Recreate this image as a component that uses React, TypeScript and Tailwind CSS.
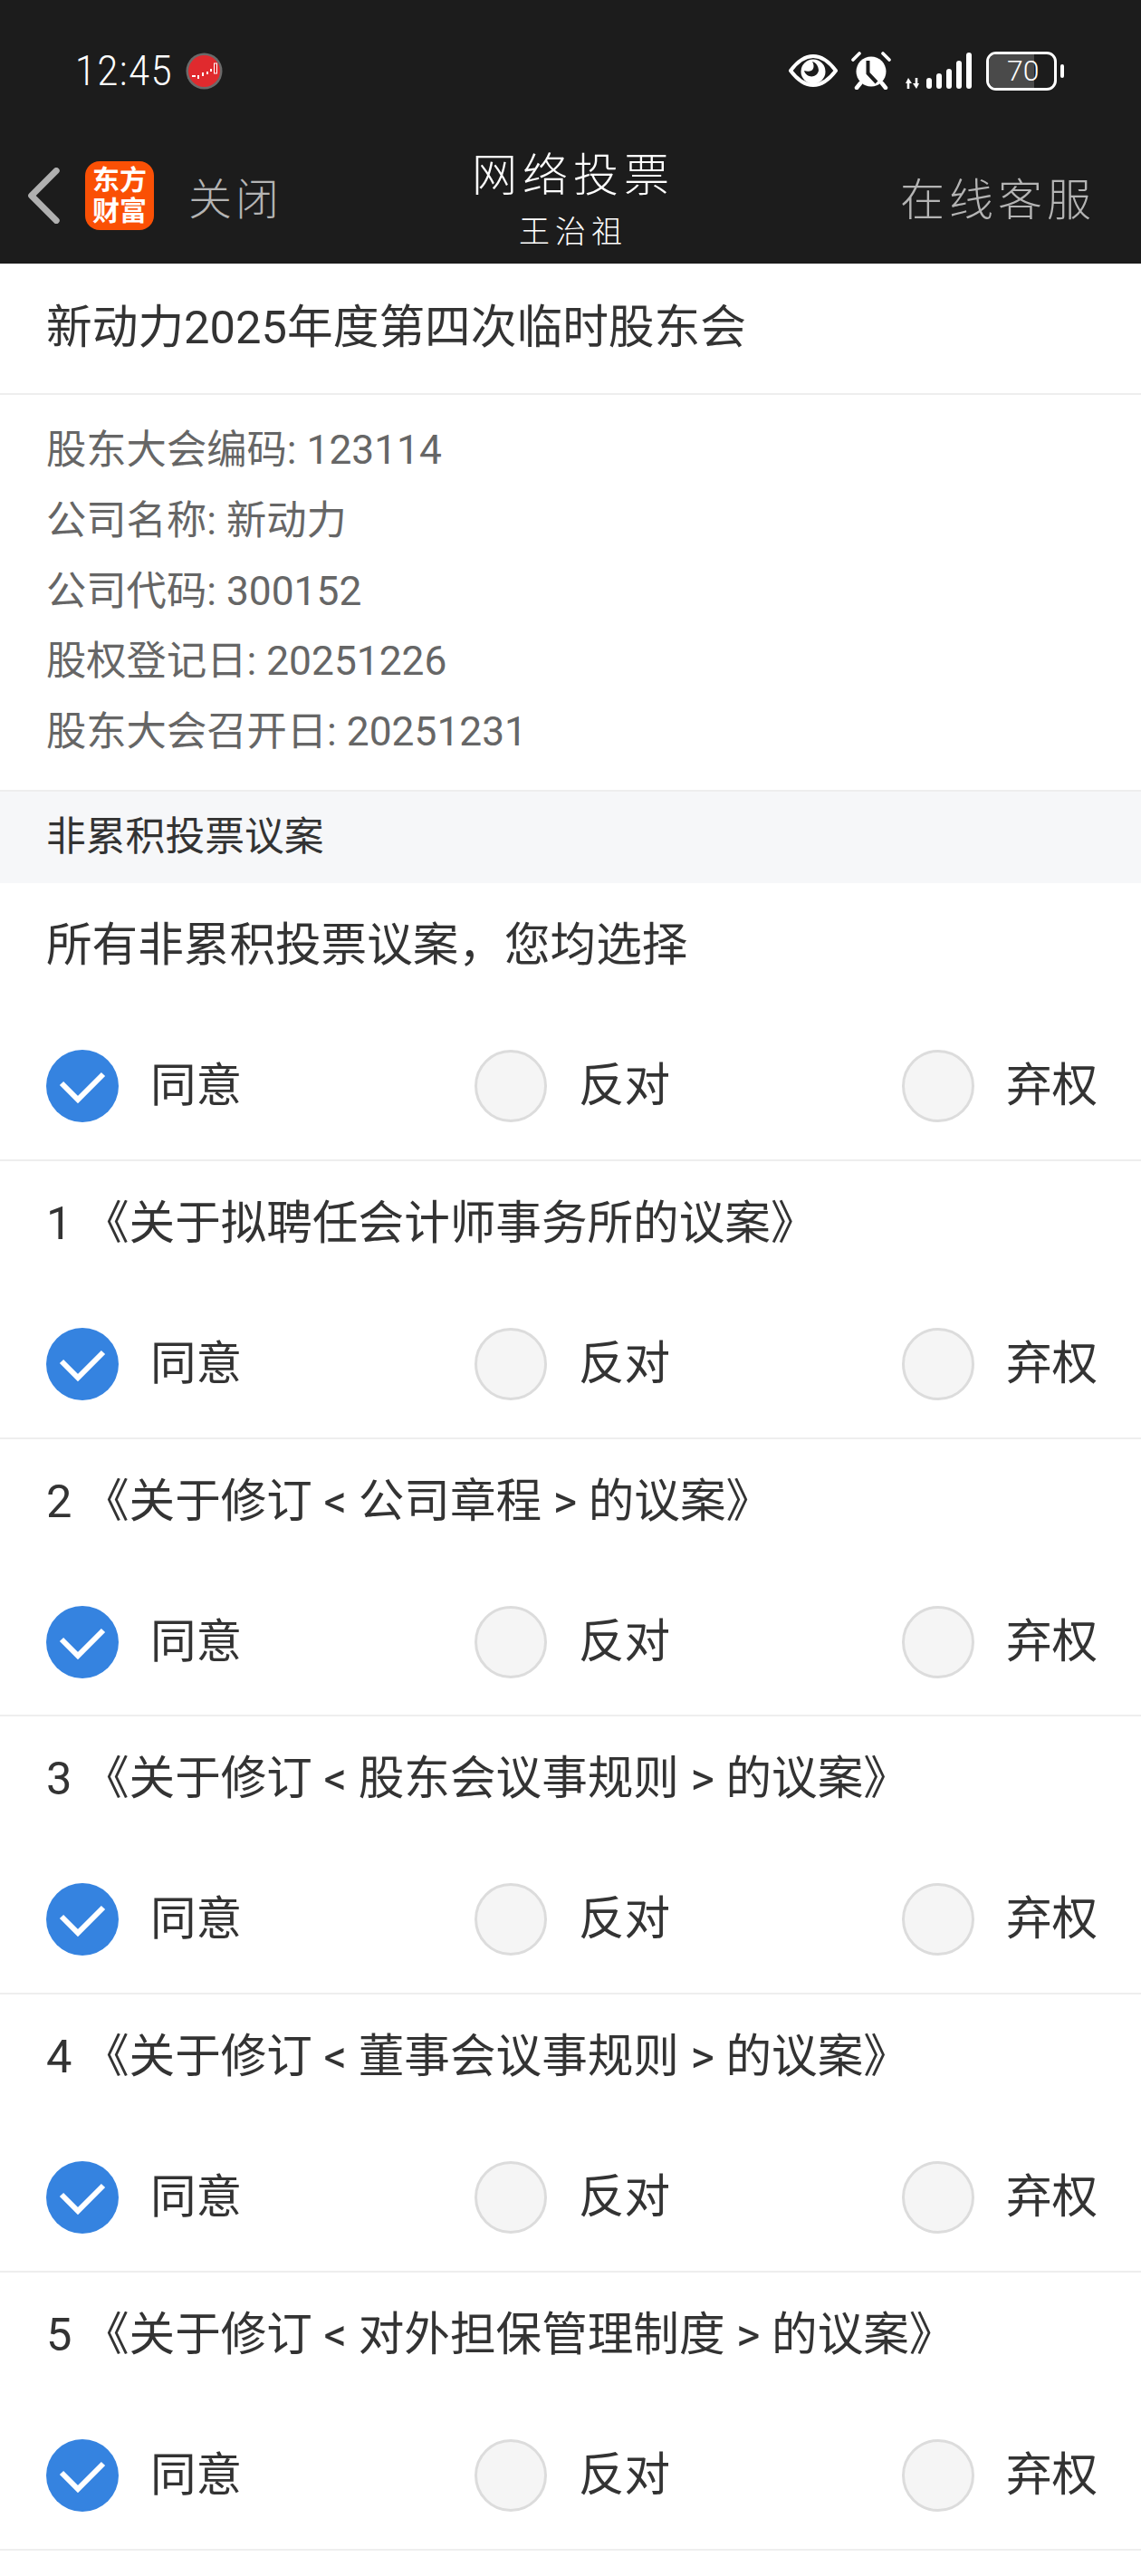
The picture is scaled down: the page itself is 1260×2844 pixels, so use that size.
const SANS = "font-['Roboto','Noto_Sans_CJK_SC',sans-serif]";

type ChoiceProps = { label: string; checked?: boolean };

// Round voting choice with its caption
function Choice({ label, checked }: ChoiceProps) {
  return (
    <div className="flex items-center">
      {checked ? (
        <span className="flex h-[80px] w-[80px] items-center justify-center rounded-full bg-[#3583e0]">
          <svg viewBox="0 0 80 80" className="h-[80px] w-[80px]">
            <path d="M17 37 L35 55 L63 27" fill="none" stroke="#fff" strokeWidth="6" />
          </svg>
        </span>
      ) : (
        <span className="h-[80px] w-[80px] rounded-full border-[3px] border-[#dcdcdc] bg-[#f5f5f5]" />
      )}
      <span className="ml-[35px] whitespace-nowrap text-[50.6px] leading-[80px] text-[#333]">{label}</span>
    </div>
  );
}

// One motion: title line, then the three choices
function Motion({ title }: { title: string }) {
  return (
    <section className="h-[306.8px] border-b-[2px] border-[#eeeeee] pl-[51px] pr-[49px]">
      <h2 className="pt-[37px] text-[50.6px] font-normal leading-[64px] text-[#333]">{title}</h2>
      <div className="mt-[83px] grid grid-cols-[473px_472px_1fr]">
        <Choice label="同意" checked />
        <Choice label="反对" />
        <Choice label="弃权" />
      </div>
    </section>
  );
}

// Phone status bar icons
function StatusIcons() {
  return (
    <div className="flex h-[46px] items-center">
      <svg viewBox="0 0 54 36" className="h-[36px] w-[54px]" fill="none">
        <path d="M2 18 C11 6 19 2 27 2 C35 2 43 6 52 18 C43 30 35 34 27 34 C19 34 11 30 2 18Z" stroke="#fff" strokeWidth="4" />
        <circle cx="27" cy="19" r="13.5" fill="#fff" />
        <path d="M26 8 C30 15 26 21 17 18 C19 26 31 27 33 18 C33 13 30 9 26 8Z" fill="#1c1c1c" />
      </svg>
      <svg viewBox="0 0 44 42" className="ml-[15px] h-[42px] w-[44px]">
        <circle cx="22" cy="22" r="16.5" fill="#fff" />
        <path d="M2 9 L9 2 M42 9 L35 2" stroke="#fff" strokeWidth="3.6" strokeLinecap="round" />
        <path d="M10 35 L6 40 M34 35 L38 40" stroke="#fff" strokeWidth="4.5" strokeLinecap="round" />
        <path d="M18.5 10 V24 L28 34" fill="none" stroke="#1c1c1c" strokeWidth="4" />
      </svg>
      <svg viewBox="0 0 73 41" className="ml-[16px] h-[41px] w-[73px]">
        <path d="M3 40 V32 M12 28 V36" stroke="#fff" strokeWidth="2.6" />
        <path d="M0 34 L3 28 L7 34Z M8 34 L12 40 L15 34Z" fill="#fff" />
        <rect x="23" y="28" width="6" height="12" rx="3" fill="#fff" />
        <rect x="34" y="23" width="6" height="17" rx="3" fill="#fff" />
        <rect x="45" y="18" width="6" height="22" rx="3" fill="#fff" />
        <rect x="56" y="9" width="6" height="31" rx="3" fill="#fff" />
        <rect x="67" y="0" width="6" height="40" rx="3" fill="#fff" />
      </svg>
      <div className="relative ml-[16px] h-[43px] w-[78px] overflow-hidden rounded-[11px] border-[3px] border-white">
        <div className="h-full w-[70%] bg-[#4a4a4a]" />
        <span className="absolute inset-0 pl-[20px] text-[32px] font-light leading-[37px] text-white">70</span>
      </div>
      <span className="ml-[4px] h-[15px] w-[4px] rounded-[2px] bg-white" />
    </div>
  );
}

const INFO = [
  "股东大会编码: 123114",
  "公司名称: 新动力",
  "公司代码: 300152",
  "股权登记日: 20251226",
  "股东大会召开日: 20251231",
];

const MOTIONS = [
  "1 《关于拟聘任会计师事务所的议案》",
  "2 《关于修订 < 公司章程 > 的议案》",
  "3 《关于修订 < 股东会议事规则 > 的议案》",
  "4 《关于修订 < 董事会议事规则 > 的议案》",
  "5 《关于修订 < 对外担保管理制度 > 的议案》",
];

export default function App() {
  return (
    <div className={`h-[2844px] w-[1260px] overflow-hidden bg-white ${SANS}`}>
      <header className="h-[291px] bg-[#1c1c1c]">
        <div className="flex h-[150px] items-start justify-between pl-[83px] pr-[85px] pt-[55px]">
          <div className="flex h-[46px] items-center">
            <span className="w-[122px] origin-left scale-x-[0.89] text-[46px] font-light leading-[46px] tracking-[2px] text-white">12:45</span>
            <svg viewBox="0 0 41 41" className="h-[41px] w-[41px]">
              <circle cx="20.5" cy="20.5" r="20" fill="#6a6a6a" />
              <circle cx="20.5" cy="20.5" r="17.5" fill="#e02a2e" />
              <path d="M7 26 H11 M14 25 V29 M19 22 V26 M24 21 V24 M28 18 V21" stroke="#fff" strokeWidth="2" />
              <rect x="31.5" y="12" width="3" height="11" fill="none" stroke="#fff" strokeWidth="1" />
            </svg>
          </div>
          <StatusIcons />
        </div>
        <div className="relative flex h-[141px] items-center pb-[10px]">
          <svg viewBox="0 0 40 70" className="ml-[30px] h-[62px] w-[36px]">
            <path d="M36 4 L5 35 L36 66" fill="none" stroke="#b0b0b0" strokeWidth="8" strokeLinecap="round" strokeLinejoin="round" />
          </svg>
          <div className="ml-[28px] flex h-[76px] w-[76px] flex-col items-center justify-center rounded-[16px] bg-[#fa5005] text-[30px] font-bold leading-[34px] text-white">
            <span>东方</span>
            <span>财富</span>
          </div>
          <span className="ml-[38px] mt-[10px] text-[48px] font-light tracking-[4px] text-[#b4b4b4]">关闭</span>
          <div className="absolute left-[6px] right-0 top-[13px] flex flex-col items-center">
            <span className="text-[50px] font-light leading-[62px] tracking-[6px] text-white">网络投票</span>
            <span className="mt-[12px] text-[34px] font-light leading-[38px] tracking-[6px] text-white">王治祖</span>
          </div>
          <span className="absolute right-[50px] top-[35px] text-[49px] font-light tracking-[5px] text-[#b4b4b4]">在线客服</span>
        </div>
      </header>

      <div className="flex h-[145px] items-center border-b-[2px] border-[#eeeeee] pl-[51px]">
        <h1 className="text-[50.7px] font-normal text-[#333]">新动力2025年度第四次临时股东会</h1>
      </div>

      <div className="h-[436px] pl-[51px] pt-[23px]">
        {INFO.map((line) => (
          <p key={line} className="text-[44.3px] leading-[77.8px] text-[#666]">{line}</p>
        ))}
      </div>

      <div className="flex h-[103px] items-center border-t-[2px] border-[#eeeeee] bg-[#f6f7f9] pl-[51px] text-[43.8px] text-[#333]">
        非累积投票议案
      </div>

      <Motion title="所有非累积投票议案，您均选择" />
      {MOTIONS.map((m) => (
        <Motion key={m} title={m} />
      ))}
    </div>
  );
}
